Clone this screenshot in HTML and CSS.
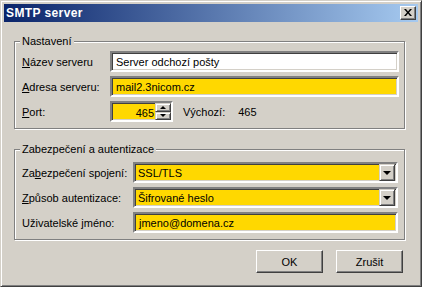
FILE: index.html
```html
<!DOCTYPE html>
<html lang="cs">
<head>
    <meta charset="UTF-8">
    <title>SMTP server</title>
    <link rel="stylesheet" href="styles.css">
</head>
<body>
    <div class="window">
        <div class="titlebar">
            <span class="title">SMTP server</span>
            <button class="close-btn">
                <svg width="8" height="7" viewBox="0 0 8 7"><path d="M0 0h2l2 2.5L6 0h2L5 3.5 8 7H6L4 4.5 2 7H0l3-3.5z" fill="#000"/></svg>
            </button>
        </div>
        <div class="content">
            <div class="group group-settings">
                <span class="group-title">Nastavení</span>
                <div class="row">
                    <label class="label"><u>N</u>ázev serveru</label>
                    <div class="field white">Server odchozí pošty</div>
                </div>
                <div class="row">
                    <label class="label"><u>A</u>dresa serveru:</label>
                    <div class="field">mail2.3nicom.cz</div>
                </div>
                <div class="row">
                    <label class="label"><u>P</u>ort:</label>
                    <div class="spin-box">
                        <div class="spin-value">465</div>
                        <div class="spin-buttons">
                            <span class="spin-btn"><i class="arrow-up"></i></span>
                            <span class="spin-btn"><i class="arrow-down small"></i></span>
                        </div>
                    </div>
                    <span class="default-label">Výchozí:</span>
                    <span class="default-value">465</span>
                </div>
            </div>

            <div class="group group-security">
                <span class="group-title">Zabezpečení a autentizace</span>
                <div class="row">
                    <label class="label wide">Za<u>b</u>ezpečení spojení:</label>
                    <div class="field combo">
                        <span class="combo-text">SSL/TLS</span>
                        <span class="combo-btn"><i class="arrow-down"></i></span>
                    </div>
                </div>
                <div class="row">
                    <label class="label wide"><u>Z</u>působ autentizace:</label>
                    <div class="field combo">
                        <span class="combo-text">Šifrované heslo</span>
                        <span class="combo-btn"><i class="arrow-down"></i></span>
                    </div>
                </div>
                <div class="row">
                    <label class="label wide">Uživatelské <u>j</u>méno:</label>
                    <div class="field">jmeno@domena.cz</div>
                </div>
            </div>

            <div class="buttons">
                <button class="btn">OK</button>
                <button class="btn">Zrušit</button>
            </div>
        </div>
    </div>
</body>
</html>
```

FILE: styles.css
```css
* {
    margin: 0;
    padding: 0;
    box-sizing: border-box;
}
body {
    background: #d4d0c8;
    font-family: 'Liberation Sans', Arial, sans-serif;
    font-size: 11px;
    color: #000;
}
.window {
    width: 422px;
    height: 287px;
    background: #d4d0c8;
    border: 1px solid;
    border-color: #d4d0c8 #404040 #404040 #d4d0c8;
    box-shadow: inset 1px 1px 0 #fff, inset -1px -1px 0 #808080;
    padding: 3px;
    display: flex;
    flex-direction: column;
}
.titlebar {
    height: 18px;
    background: linear-gradient(to right, #0a246a, #a6caf0);
    display: flex;
    align-items: center;
    justify-content: space-between;
    padding: 0 2px 0 2px;
}
.title {
    color: #fff;
    font-weight: bold;
    font-size: 12px;
    letter-spacing: 0.4px;
}
.close-btn {
    width: 16px;
    height: 14px;
    background: #d4d0c8;
    border: 1px solid;
    border-color: #fff #404040 #404040 #fff;
    box-shadow: inset -1px -1px 0 #808080;
    display: flex;
    align-items: center;
    justify-content: center;
    padding-bottom: 1px;
}
.content {
    padding: 19px 13px 0 10px;
    display: flex;
    flex-direction: column;
}
.group {
    position: relative;
    border: 1px solid #808080;
    box-shadow: 1px 1px 0 #fff, inset 1px 1px 0 #fff;
    padding: 9px 5px 0 7px;
}
.group-title {
    position: absolute;
    top: -7px;
    left: 5px;
    padding: 0 2px;
    line-height: 13px;
    background: #d4d0c8;
}
.group-settings {
    height: 88px;
}
.group-security {
    height: 91px;
    margin-top: 20px;
    padding-top: 12px;
    padding-right: 6px;
}
.row {
    display: flex;
    align-items: center;
    height: 21px;
}
.row + .row {
    margin-top: 4px;
}
.label {
    width: 88px;
    flex-shrink: 0;
}
.label.wide {
    width: 111px;
}
.field {
    flex: 1;
    height: 21px;
    background: #ffd800;
    border: 2px solid;
    border-color: #808080 #fff #fff #808080;
    box-shadow: inset 1px 1px 0 #404040, inset -1px -1px 0 #d4d0c8;
    padding: 0 4px;
    display: flex;
    align-items: center;
    white-space: nowrap;
}
.field.white {
    background: #fff;
}
.combo {
    padding: 0 1px 0 3px;
}
.combo-text {
    flex: 1;
}
.combo-btn {
    width: 16px;
    height: 17px;
    background: #d4d0c8;
    border: 1px solid;
    border-color: #d4d0c8 #404040 #404040 #d4d0c8;
    box-shadow: inset 1px 1px 0 #fff, inset -1px -1px 0 #808080;
    display: flex;
    align-items: center;
    justify-content: center;
}
.arrow-down {
    width: 0;
    height: 0;
    border-left: 4px solid transparent;
    border-right: 4px solid transparent;
    border-top: 4px solid #000;
}
.arrow-up {
    width: 0;
    height: 0;
    border-left: 3px solid transparent;
    border-right: 3px solid transparent;
    border-bottom: 3px solid #000;
}
.arrow-down.small {
    border-left-width: 3px;
    border-right-width: 3px;
    border-top-width: 3px;
}
.spin-box {
    width: 63px;
    height: 21px;
    display: flex;
    border: 2px solid;
    border-color: #808080 #fff #fff #808080;
    box-shadow: inset 1px 1px 0 #404040, inset -1px -1px 0 #d4d0c8;
    background: #ffd800;
}
.spin-value {
    flex: 1;
    text-align: right;
    padding: 3px 1px 0 0;
    margin: 1px 0 0 1px;
}
.spin-buttons {
    width: 16px;
    display: flex;
    flex-direction: column;
}
.spin-btn {
    flex: 1;
    background: #d4d0c8;
    border: 1px solid;
    border-color: #d4d0c8 #404040 #404040 #d4d0c8;
    box-shadow: inset 1px 1px 0 #fff, inset -1px -1px 0 #808080;
    display: flex;
    align-items: center;
    justify-content: center;
}
.default-label {
    margin-left: 10px;
}
.default-value {
    margin-left: 13px;
}
.buttons {
    display: flex;
    justify-content: flex-end;
    gap: 13px;
    margin-top: 10px;
    padding-right: 2px;
}
.btn {
    width: 67px;
    height: 23px;
    background: #d4d0c8;
    font-family: inherit;
    font-size: 11px;
    color: #000;
    border: 1px solid;
    border-color: #fff #404040 #404040 #fff;
    box-shadow: inset -1px -1px 0 #808080;
}
```
